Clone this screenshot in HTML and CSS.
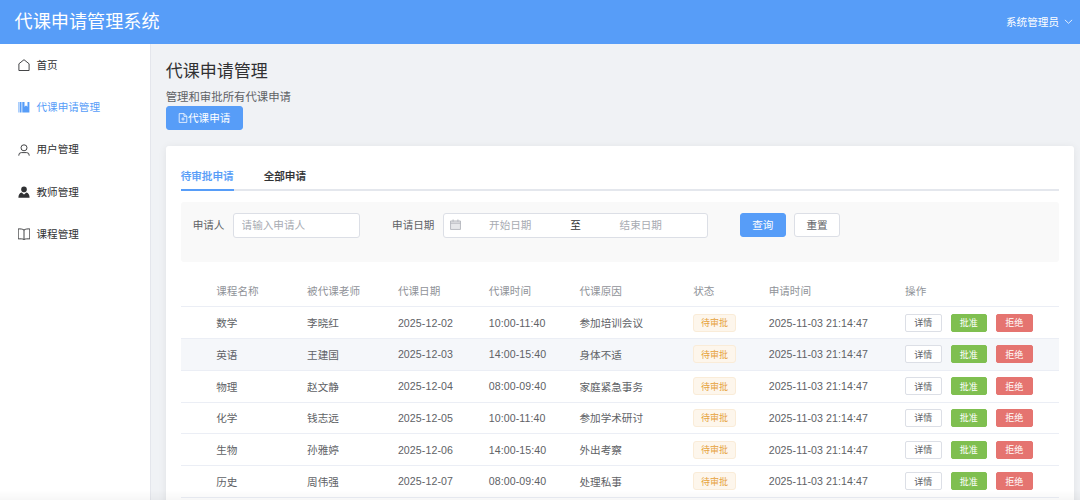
FILE: index.html
```html
<!DOCTYPE html>
<html lang="zh-CN">
<head>
  <meta charset="UTF-8">
  <title>代课申请管理系统</title>
  <link rel="stylesheet" href="styles.css">
</head>
<body>
  <header class="header">
    <h1 class="header-title">代课申请管理系统</h1>
    <div class="user-menu">
      <span>系统管理员</span>
      <svg class="arrow-icon" viewBox="0 0 10 10"><path d="M1 3.2 5 7l4-3.8"/></svg>
    </div>
  </header>

  <div class="layout">
    <nav class="sidebar">
      <a class="menu-item">
        <svg class="menu-icon" viewBox="0 0 12 12"><path d="M.9 11.5V4.8L6 .7l5.1 4.1v6.7z"/></svg>
        <span>首页</span>
      </a>
      <a class="menu-item active">
        <svg class="menu-icon filled" viewBox="0 0 12 12"><path d="M.5 1h.9v10.500H.5zM2 1h1.500v10.500H2zM4.300 1h2.200v4.800l1.500-1.200 1.500 1.200V1h1.900v10.500H4.300z"/></svg>
        <span>代课申请管理</span>
      </a>
      <a class="menu-item">
        <svg class="menu-icon" viewBox="0 0 12 12"><circle cx="6" cy="3.8" r="3"/><path d="M.8 11.7v-.5a2.6 2.6 0 0 1 2.6-2.6h5.2a2.6 2.6 0 0 1 2.6 2.6v.5"/></svg>
        <span>用户管理</span>
      </a>
      <a class="menu-item">
        <svg class="menu-icon filled" viewBox="0 0 12 12"><circle cx="6" cy="3.4" r="2.8"/><path d="M.4 11.7c0-3 1.2-4.7 3.2-5.2L6 8.5l2.4-2c2 .5 3.2 2.200 3.2 5.200z"/></svg>
        <span>教师管理</span>
      </a>
      <a class="menu-item">
        <svg class="menu-icon" viewBox="0 0 12 12"><path d="M6 2v9.200M6 2C4.6 1 2.5.8.2.9v10c2.300-.1 4.400-.2 5.800.6 1.400-.8 3.500-.7 5.800-.6V.9C9.500.8 7.400 1 6 2z"/></svg>
        <span>课程管理</span>
      </a>
    </nav>

    <main class="main">
      <h2 class="page-title">代课申请管理</h2>
      <p class="page-desc">管理和审批所有代课申请</p>
      <button class="btn btn-primary btn-add">
        <svg class="add-icon" viewBox="0 0 10 10"><path d="M1.2.6h4.900l2.700 2.700v6.100H1.200zM6 .6v2.800h2.800M5 4.300v3.400M3.300 6h3.400"/></svg>
        <span>代课申请</span>
      </button>

      <section class="card">
        <div class="tabs">
          <div class="tab active">待审批申请</div>
          <div class="tab">全部申请</div>
        </div>

        <form class="search-form">
          <label class="form-label">申请人</label>
          <input class="input" type="text" placeholder="请输入申请人">
          <label class="form-label date-label">申请日期</label>
          <div class="date-range">
            <svg class="date-icon" viewBox="0 0 10 10"><path class="date-fill" d="M.5 1.8h9v7.700h-9z"/><path d="M.5 1.8h9v7.700h-9zM.5 3.800h9M2.800.4v2M7.200.4v2"/></svg>
            <span class="date-text">开始日期</span>
            <span class="date-sep">至</span>
            <span class="date-text">结束日期</span>
          </div>
          <button class="btn btn-primary btn-search" type="button">查询</button>
          <button class="btn btn-default" type="button">重置</button>
        </form>

        <div class="table">
          <div class="row row-head">
            <div>课程名称</div><div>被代课老师</div><div>代课日期</div><div>代课时间</div><div>代课原因</div><div>状态</div><div>申请时间</div><div>操作</div>
          </div>
          <div id="tableBody"></div>
        </div>
      </section>
    </main>
  </div>
  <div class="bottom-shade"></div>

  <script src="script.js"></script>
</body>
</html>
```

FILE: styles.css
```css
* {
  box-sizing: border-box;
}

body {
  margin: 0;
  height: 500px;
  overflow: hidden;
  font-family: "Liberation Sans", "Noto Sans CJK SC", sans-serif;
  font-size: 10.6px;
  color: #606266;
  background-color: #f0f2f5;
}

h1, h2, p {
  margin: 0;
  font-weight: 400;
}

button, input {
  font-family: inherit;
  font-size: inherit;
}

svg {
  fill: none;
  stroke: currentColor;
  flex: none;
}

/* Header */
.header {
  display: flex;
  justify-content: space-between;
  align-items: center;
  height: 44px;
  padding: 0 7px 0 14.5px;
  background-color: #579df8;
  color: #fff;
}

.header-title {
  font-size: 18.15px;
  line-height: 44px;
}

.user-menu {
  display: flex;
  align-items: center;
  gap: 5px;
  height: 42px;
  margin-bottom: 2px;
}

.arrow-icon {
  width: 9px;
  height: 9px;
  stroke-width: 0.9;
}

/* Sidebar */
.layout {
  display: flex;
  height: 456px;
  overflow: hidden;
}

.sidebar {
  width: 151px;
  flex: none;
  background-color: #fff;
  border-right: 1px solid #e4e6ec;
}

.menu-item {
  display: flex;
  align-items: center;
  gap: 7px;
  height: 42.3px;
  padding-left: 17.5px;
  color: #303133;
}

.menu-item span {
  padding-bottom: 1.5px;
}

.menu-item.active {
  color: #579df8;
}

.menu-icon {
  width: 12px;
  height: 12px;
  stroke-width: 0.9;
}

.menu-icon.filled {
  fill: currentColor;
  stroke: none;
}

/* Page */
.main {
  flex: 1;
  min-width: 0;
  padding: 15.5px 6px 0 14.7px;
}

.page-title {
  font-size: 17px;
  line-height: 23px;
  color: #303133;
}

.page-desc {
  margin-top: 6.5px;
  font-size: 11.4px;
  line-height: 17px;
}

.btn {
  display: flex;
  align-items: center;
  justify-content: center;
  height: 24.5px;
  padding: 0 0 1px;
  border: 1px solid #dcdfe6;
  border-radius: 3px;
  background-color: #fff;
  color: #606266;
}

.btn-primary {
  border-color: #579df8;
  background-color: #579df8;
  color: #fff;
}

.btn-add {
  width: 77px;
  height: 24px;
}

.add-icon {
  width: 10px;
  height: 10px;
  stroke-width: 0.8;
}

.card {
  height: 600px;
  margin-top: 15.5px;
  padding: 15px 15.5px 0 15px;
  border-radius: 3px;
  background-color: #fff;
  box-shadow: 0 1px 8px rgba(0, 0, 0, 0.07);
}

/* Tabs */
.tabs {
  display: flex;
  gap: 30px;
  height: 30px;
  border-bottom: 2px solid #e4e7ed;
}

.tab {
  height: 30px;
  line-height: 30px;
  font-weight: 500;
  -webkit-text-stroke: 0.2px currentColor;
  color: #303133;
}

.tab.active {
  color: #579df8;
  border-bottom: 2px solid #579df8;
}

/* Search form */
.search-form {
  display: flex;
  align-items: flex-start;
  height: 60px;
  margin-top: 11px;
  padding: 11px 12px;
  border-radius: 3px;
  background-color: #f9f9f9;
}

.form-label {
  line-height: 24px;
  margin-right: 8.6px;
}

.date-label {
  margin-left: 32px;
}

.input,
.date-range {
  height: 25px;
  padding: 0 7.5px 1px;
  border: 1px solid #dcdfe6;
  border-radius: 3px;
  background-color: #fff;
}

.input {
  width: 127px;
}

.input::placeholder {
  color: #a8abb2;
}

.date-range {
  display: flex;
  align-items: center;
  width: 265px;
  padding-left: 6px;
  color: #a8abb2;
}

.date-icon {
  width: 11px;
  height: 11px;
  stroke-width: 0.7;
}

.date-text {
  width: 98.5px;
  text-align: center;
}

.date-fill {
  fill: #e6e7ea;
  stroke: none;
}

.date-sep {
  width: 32px;
  text-align: center;
  color: #303133;
}

.btn-search {
  margin-left: 32px;
  margin-right: 8.8px;
}

.search-form .btn {
  width: 45.5px;
}

/* Table */
.table {
  margin-top: 14px;
}

.row {
  display: grid;
  grid-template-columns: 90.8px 90.8px 90.8px 90.8px 113.8px 75.4px 136.4px 1fr;
  align-items: center;
  height: 31.75px;
  padding-left: 35.6px;
  border-bottom: 1px solid #ebeef5;
}

.row-head {
  color: #909399;
}

.row.hover {
  background-color: #f5f7fa;
}

.number {
  letter-spacing: 0.09px;
}

.tag {
  display: inline-flex;
  align-items: center;
  justify-content: center;
  width: 42.5px;
  height: 18px;
  border: 1px solid #faecd8;
  border-radius: 3px;
  background-color: #fdf6ec;
  color: #e6a23c;
  font-size: 9px;
}

.actions {
  display: flex;
  gap: 9px;
}

.actions .btn {
  width: 36.5px;
  height: 18px;
  padding: 0;
  border-radius: 2px;
  font-size: 9px;
}

.actions .btn-success {
  border-color: #7fbf50;
  background-color: #7fbf50;
  color: #fff;
}

.actions .btn-danger {
  border-color: #e57470;
  background-color: #e57470;
  color: #fff;
}

/* Fade over the content at the window edge */
.bottom-shade {
  position: fixed;
  left: 0;
  right: 0;
  bottom: 0;
  height: 10px;
  background: linear-gradient(rgba(0, 0, 0, 0), rgba(0, 0, 0, 0.03));
  pointer-events: none;
}
```

FILE: script.js
```javascript
const applications = [
  { course: '数学', teacher: '李晓红', date: '2025-12-02', time: '10:00-11:40', reason: '参加培训会议' },
  { course: '英语', teacher: '王建国', date: '2025-12-03', time: '14:00-15:40', reason: '身体不适', hover: true },
  { course: '物理', teacher: '赵文静', date: '2025-12-04', time: '08:00-09:40', reason: '家庭紧急事务' },
  { course: '化学', teacher: '钱志远', date: '2025-12-05', time: '10:00-11:40', reason: '参加学术研讨' },
  { course: '生物', teacher: '孙雅婷', date: '2025-12-06', time: '14:00-15:40', reason: '外出考察' },
  { course: '历史', teacher: '周伟强', date: '2025-12-07', time: '08:00-09:40', reason: '处理私事' }
];

// Render table rows
document.getElementById('tableBody').innerHTML = applications.map(item => `
  <div class="row${item.hover ? ' hover' : ''}">
    <div>${item.course}</div>
    <div>${item.teacher}</div>
    <div class="number">${item.date}</div>
    <div class="number">${item.time}</div>
    <div>${item.reason}</div>
    <div><span class="tag">待审批</span></div>
    <div class="number">2025-11-03 21:14:47</div>
    <div class="actions">
      <button class="btn">详情</button>
      <button class="btn btn-success">批准</button>
      <button class="btn btn-danger">拒绝</button>
    </div>
  </div>
`).join('');
```
